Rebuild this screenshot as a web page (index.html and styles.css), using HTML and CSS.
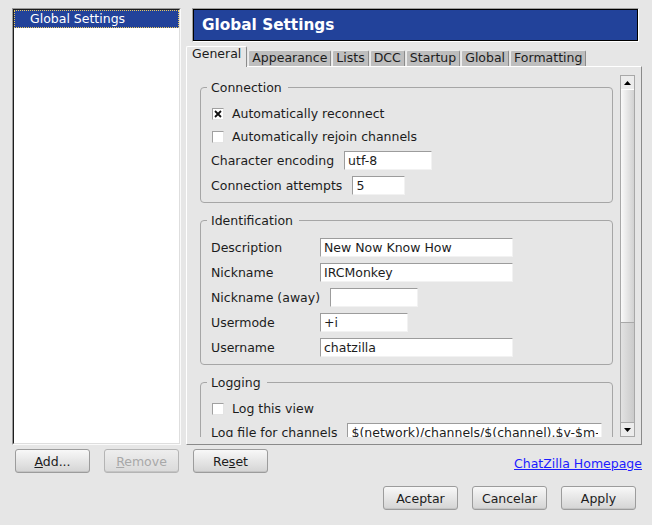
FILE: index.html
```html
<!DOCTYPE html>
<html>
<head>
<title>Global Settings</title>
<link rel="stylesheet" href="styles.css">
</head>
<body>
<div class="window">
  <div class="main">
    <div class="sidebar">
      <div class="list">
        <div class="list-item selected">Global Settings</div>
      </div>
    </div>

    <div class="pane">
      <div class="banner-frame"><div class="banner">Global Settings</div></div>

      <div class="tabs">
        <div class="tab selected">General</div>
        <div class="tab">Appearance</div>
        <div class="tab">Lists</div>
        <div class="tab">DCC</div>
        <div class="tab">Startup</div>
        <div class="tab">Global</div>
        <div class="tab">Formatting</div>
      </div>

      <div class="tabpanel">
        <div class="scrollbox">
          <div class="scroll-content">

            <fieldset class="group">
              <legend>Connection</legend>
              <div class="check-row">
                <span class="checkbox"><svg width="10" height="10" viewBox="0 0 10 10"><path d="M2 2 L8 8 M8 2 L2 8" stroke="#111" stroke-width="1.8"/></svg></span>
                Automatically reconnect
              </div>
              <div class="check-row"><span class="checkbox"></span>Automatically rejoin channels</div>
              <div class="field-row"><label>Character encoding</label><input class="textbox w-88" type="text" value="utf-8"></div>
              <div class="field-row"><label>Connection attempts</label><input class="textbox w-53" type="text" value="5"></div>
            </fieldset>

            <fieldset class="group">
              <legend>Identification</legend>
              <div class="field-row"><label class="label-wide">Description</label><input class="textbox w-193" type="text" value="New Now Know How"></div>
              <div class="field-row"><label class="label-wide">Nickname</label><input class="textbox w-193" type="text" value="IRCMonkey"></div>
              <div class="field-row"><label class="label-wide">Nickname (away)</label><input class="textbox w-88" type="text" value=""></div>
              <div class="field-row"><label class="label-wide">Usermode</label><input class="textbox w-88" type="text" value="+i"></div>
              <div class="field-row"><label class="label-wide">Username</label><input class="textbox w-193" type="text" value="chatzilla"></div>
            </fieldset>

            <fieldset class="group">
              <legend>Logging</legend>
              <div class="check-row"><span class="checkbox"></span>Log this view</div>
              <div class="field-row"><label>Log file for channels</label><input class="textbox w-257" type="text" value="$(network)/channels/$(channel).$y-$m-$d.log"></div>
            </fieldset>

          </div>
          <div class="scrollbar">
            <div class="sb-btn"><svg width="7" height="4" viewBox="0 0 7 4"><polygon points="0,4 3.5,0 7,4" fill="#000"/></svg></div>
            <div class="sb-thumb"></div>
            <div class="sb-track"></div>
            <div class="sb-btn"><svg width="7" height="4" viewBox="0 0 7 4"><polygon points="0,0 7,0 3.5,4" fill="#000"/></svg></div>
          </div>
        </div>
      </div>
    </div>
  </div>

  <div class="actions">
    <button class="button"><u>A</u>dd...</button>
    <button class="button disabled"><u>R</u>emove</button>
    <button class="button">Re<u>s</u>et</button>
    <a class="homepage" href="#">ChatZilla Homepage</a>
  </div>

  <div class="dialog-buttons">
    <button class="button">Aceptar</button>
    <button class="button">Cancelar</button>
    <button class="button">Apply</button>
  </div>
</div>
</body>
</html>
```

FILE: styles.css
```css
body {
  margin: 0;
  background: #e6e6e6;
  font: 12.5px "DejaVu Sans", sans-serif;
  color: #1c1c1c;
}
.window {
  width: 652px;
  height: 525px;
  box-sizing: border-box;
  padding: 8px 10px 0 12px;
}
.main {
  display: flex;
  height: 437px;
}

/* left list */
.sidebar {
  width: 169px;
  box-sizing: border-box;
  border: 1px solid;
  border-color: #9a9a9a #fafafa #fafafa #9a9a9a;
}
.list {
  height: 100%;
  box-sizing: border-box;
  background: #fff;
  border: 1px solid;
  border-color: #1e1e1e #dedede #dedede #1e1e1e;
}
.list-item {
  height: 18px;
  line-height: 16px;
  padding-left: 15px;
  box-sizing: border-box;
  border: 1px dotted transparent;
}
.list-item.selected {
  background: #22429a;
  color: #fff;
  border-color: #e8c860;
}

/* right side */
.pane {
  margin-left: 5px;
  width: 456px;
  display: flex;
  flex-direction: column;
}
.banner-frame {
  margin: 0 3px 0 6px;
  border: 1px solid;
  border-color: #a0a0a0 #fff #fff #a0a0a0;
}
.banner {
  height: 30px;
  border: 1px solid #000;
  background: #22429a;
  color: #fff;
  font-weight: bold;
  font-size: 15.3px;
  padding-left: 8px;
  display: flex;
  align-items: center;
}
.tabs {
  display: flex;
  align-items: flex-end;
  height: 20px;
  margin-top: 4px;
  position: relative;
  z-index: 1;
}
.tab {
  height: 16px;
  box-sizing: border-box;
  border: 1px solid;
  border-bottom: none;
  border-color: #ececec #8c8c8c #8c8c8c #ececec;
  border-radius: 2px 2px 0 0;
  background: #bebebe;
  padding: 0 3px;
  margin-left: 1px;
  line-height: 14px;
}
.tab.selected {
  height: 21px;
  margin: 0 0 -1px 0;
  background: #e6e6e6;
  border-color: #fff #8c8c8c #8c8c8c #fff;
  padding: 0 5px;
  line-height: 14px;
}
.tabpanel {
  flex: 1;
  min-height: 0;
  border: 1px solid;
  border-color: #fff #8a8a8a #8a8a8a #fff;
  padding: 8px 6px 7px 7px;
}
.scrollbox {
  display: flex;
  height: 100%;
}
.scroll-content {
  flex: 1;
  overflow: hidden;
  padding: 5px 7px 0 6px;
}

/* group boxes */
.group {
  margin: 0 0 10px;
  padding: 7px 10px 4px;
  border: 1px solid #a6a6a6;
  border-radius: 4px;
  min-width: 0;
}
.group legend {
  padding: 0 6px 0 4px;
  margin-left: -4px;
  line-height: 15px;
}
.check-row {
  display: flex;
  align-items: center;
  gap: 8px;
  height: 23px;
  padding-left: 1px;
}
.checkbox {
  width: 12px;
  height: 12px;
  box-sizing: border-box;
  border: 1px solid;
  border-color: #a0a0a0 #e4e4e4 #e4e4e4 #a0a0a0;
  background: #fff;
  display: flex;
  align-items: center;
  justify-content: center;
}
.field-row {
  display: flex;
  align-items: center;
  height: 25px;
}
.field-row label {
  margin-right: 10px;
  white-space: nowrap;
}
.field-row .label-wide {
  min-width: 99px;
}
.textbox {
  height: 19px;
  box-sizing: border-box;
  border: 1px solid;
  border-color: #9c9c9c #f2f2f2 #f2f2f2 #9c9c9c;
  background: #fff;
  font: inherit;
  color: inherit;
  padding: 0 3px;
  margin: 0;
  outline: none;
}
.w-53 { width: 53px; }
.w-88 { width: 88px; }
.w-193 { width: 193px; }
.w-257 { width: 257px; }

/* scrollbar */
.scrollbar {
  width: 15px;
  display: flex;
  flex-direction: column;
  border-left: 1px solid #a8a8a8;
  border-right: 1px solid #a8a8a8;
  box-sizing: border-box;
}
.sb-btn {
  height: 15px;
  box-sizing: border-box;
  border-top: 1px solid #a8a8a8;
  border-bottom: 1px solid #a8a8a8;
  background: #ececec;
  display: flex;
  align-items: center;
  justify-content: center;
}
.sb-btn:first-child {
  border-bottom-color: #fff;
}
.sb-thumb {
  height: 232px;
  background: linear-gradient(to right, #fafafa, #d2d2d2);
  border-bottom: 1px solid #a8a8a8;
}
.sb-track {
  flex: 1;
  background: linear-gradient(to right, #e2e2e2, #cacaca);
}

/* bottom buttons */
.actions {
  display: flex;
  align-items: flex-start;
  gap: 14px;
  margin-top: 4px;
  padding-left: 3px;
}
.button {
  width: 75px;
  height: 24px;
  box-sizing: border-box;
  border: 1px solid #9c9c9c;
  border-radius: 3px;
  background: linear-gradient(#f8f8f8, #d4d4d4);
  box-shadow: inset 0 -1px 0 #c4c4c4;
  font: inherit;
  color: inherit;
  padding: 0;
  margin: 0;
}
.button.disabled {
  color: #a8a8a8;
  border-color: #b4b4b4;
  background: linear-gradient(#eeeeee, #dadada);
}
.homepage {
  margin-left: auto;
  margin-top: 7px;
  line-height: 15px;
  color: #1c1cff;
}
.dialog-buttons {
  display: flex;
  justify-content: flex-end;
  gap: 14px;
  margin-top: 13px;
  padding-right: 6px;
}
```
